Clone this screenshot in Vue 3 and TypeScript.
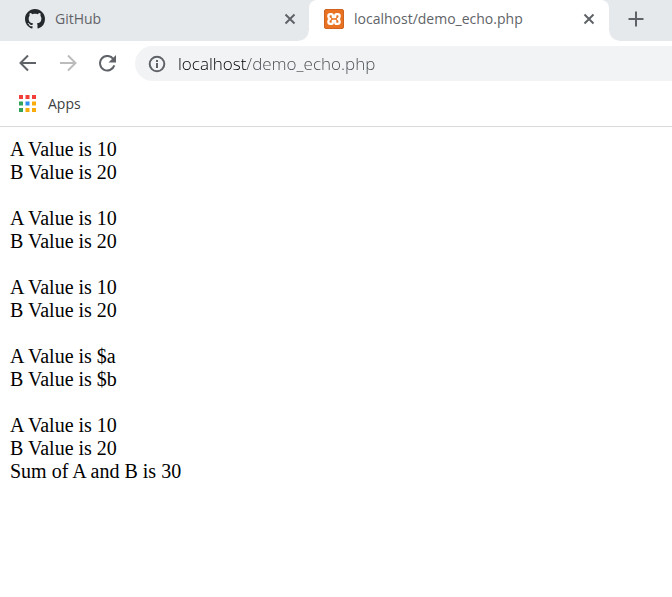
<script setup lang="ts">
import { ref } from 'vue'

const address = ref<string>('localhost/demo_echo.php')

const apps: string[] = [
  '#f33f3a', '#f33f3a', '#f33f3a',
  '#34a35a', '#2f8cf0', '#f9ab0c',
  '#34a35a', '#f9ab0c', '#f9ab0c',
]

const groups: string[][] = [
  ['A Value is 10', 'B Value is 20'],
  ['A Value is 10', 'B Value is 20'],
  ['A Value is 10', 'B Value is 20'],
  ['A Value is $a', 'B Value is $b'],
  ['A Value is 10', 'B Value is 20', 'Sum of A and B is 30'],
]
</script>

<template>
  <div class="browser">
    <header>
      <nav class="tabs" aria-label="Tabs">
        <div class="tab">
          <svg class="favicon" viewBox="0 0 16 16" aria-hidden="true">
            <path fill="#24292e" d="M8 0C3.58 0 0 3.58 0 8c0 3.54 2.29 6.53 5.47 7.59.4.07.55-.17.55-.38 0-.19-.01-.82-.01-1.49-2.01.37-2.53-.49-2.69-.94-.09-.23-.48-.94-.82-1.13-.28-.15-.68-.52-.01-.53.63-.01 1.08.58 1.23.82.72 1.21 1.87.87 2.33.66.07-.52.28-.87.51-1.07-1.78-.2-3.64-.89-3.64-3.95 0-.87.31-1.59.82-2.15-.08-.2-.36-1.02.08-2.12 0 0 .67-.21 2.2.82.64-.18 1.32-.27 2-.27s1.36.09 2 .27c1.53-1.04 2.2-.82 2.2-.82.44 1.1.16 1.92.08 2.12.51.56.82 1.27.82 2.15 0 3.07-1.87 3.75-3.65 3.95.29.25.54.73.54 1.48 0 1.07-.01 1.93-.01 2.2 0 .21.15.46.55.38A8.01 8.01 0 0 0 16 8c0-4.42-3.58-8-8-8z" />
          </svg>
          <a class="title" href="#github">GitHub</a>
          <button class="close" type="button" aria-label="Close GitHub">
            <svg viewBox="0 0 12 12"><path d="M1.5 1.5l9 9M10.5 1.5l-9 9" /></svg>
          </button>
        </div>
        <div class="tab active">
          <svg class="favicon" viewBox="0 0 20 20" aria-hidden="true">
            <rect x="0.5" y="0.5" width="19" height="19" rx="1.5" fill="#e97222" stroke="#ce641f" />
            <path d="M6.300 5.200h1c1 0 1.500.5 1.500 1.400v1.600h2.400V6.600c0-.9.500-1.400 1.500-1.400h1c1.200 0 1.900.7 1.900 1.700v.8c0 1.100-.6 1.700-1.700 2.300 1.100.6 1.700 1.200 1.700 2.300v.8c0 1-.7 1.700-1.900 1.700h-1c-1 0-1.500-.5-1.500-1.400v-1.600H8.800v1.600c0 .9-.5 1.400-1.500 1.400h-1c-1.200 0-1.900-.7-1.900-1.700v-.8c0-1.100.6-1.700 1.700-2.300-1.100-.6-1.700-1.200-1.700-2.300v-.8c0-1 .7-1.700 1.900-1.700z" fill="none" stroke="#fff" stroke-width="2.300" stroke-linejoin="round" />
          </svg>
          <a class="title" href="#demo" aria-current="page">localhost/demo_echo.php</a>
          <button class="close" type="button" aria-label="Close localhost">
            <svg viewBox="0 0 12 12"><path d="M1.5 1.5l9 9M10.5 1.5l-9 9" /></svg>
          </button>
        </div>
        <button class="new" type="button" aria-label="New tab">
          <svg viewBox="0 0 16 16"><path d="M8 .5v15M.5 8h15" /></svg>
        </button>
      </nav>

      <div class="toolbar">
        <button class="tool" type="button" aria-label="Back">
          <svg viewBox="0 0 18 18"><path d="M17 8H2M9 .5L1.500 8 9 15.500" /></svg>
        </button>
        <button class="tool" type="button" aria-label="Forward" disabled>
          <svg viewBox="0 0 18 18"><path d="M1 8h15M9 .5L16.500 8 9 15.500" /></svg>
        </button>
        <button class="tool" type="button" aria-label="Reload">
          <svg viewBox="0 0 18 18">
            <path d="M14.300 4A7.300 7.300 0 1 0 15.300 10.400" />
            <path class="solid" d="M17 0v7.500h-7.500z" />
          </svg>
        </button>
        <div class="omnibox">
          <button class="info" type="button" aria-label="Site information">
            <svg viewBox="0 0 18 18">
              <circle cx="9" cy="9" r="7.300" />
              <path d="M9 8v5M9 5v2" />
            </svg>
          </button>
          <input v-model="address" type="text" aria-label="Address" spellcheck="false" />
        </div>
      </div>

      <div class="bookmarks">
        <a class="apps" href="#apps">
          <svg viewBox="0 0 17 17" aria-hidden="true">
            <rect v-for="(color, i) in apps" :key="i" :x="(i % 3) * 6.500" :y="Math.floor(i / 3) * 6.500" width="4" height="4" :fill="color" />
          </svg>
          <span>Apps</span>
        </a>
      </div>
    </header>

    <main>
      <p v-for="(lines, g) in groups" :key="g">
        <span v-for="line in lines" :key="line">{{ line }}</span>
      </p>
    </main>
  </div>
</template>

<style>
body {
  background: #fff;
}
</style>

<style scoped>
.browser {
  color: #000;
}

header {
  border-bottom: 1px solid #d9dadc;
  font-family: "Open Sans", "Noto Sans", sans-serif;
}

button {
  display: flex;
  align-items: center;
  justify-content: center;
  padding: 0;
  border: 0;
  background: none;
  flex: none;
}

a {
  text-decoration: none;
}

svg {
  display: block;
  flex: none;
}

button svg {
  fill: none;
  stroke: #5f6368;
  stroke-width: 2;
}

.tabs {
  display: flex;
  height: 41px;
  background: #e6e9ec;
}

.tab {
  display: flex;
  align-items: center;
  box-sizing: border-box;
  flex: 0 1 300px;
  min-width: 0;
  height: 41px;
  padding: 0 14px 3px 15px;
}

.tab:first-child {
  flex-basis: 309px;
  padding-right: 13px;
  padding-left: 25px;
}

.active {
  position: relative;
  background: #fff;
  border-radius: 8px 8px 0 0;
}

.active::before,
.active::after {
  content: "";
  position: absolute;
  bottom: 0;
  width: 10px;
  height: 10px;
}

.active::before {
  right: 100%;
  background: radial-gradient(circle at 0 0, transparent 9px, #fff 10px);
}

.active::after {
  left: 100%;
  background: radial-gradient(circle at 100% 0, transparent 9px, #fff 10px);
}

.favicon {
  width: 20px;
  height: 20px;
}

.title {
  flex: 1;
  min-width: 0;
  overflow: hidden;
  margin-left: 10px;
  color: #5f6368;
  font-size: 14px;
  line-height: 20px;
  white-space: nowrap;
}

.close svg {
  width: 12px;
  height: 12px;
}

.new {
  width: 54px;
  padding-bottom: 3px;
}

.new svg {
  width: 16px;
  height: 16px;
}

.toolbar {
  display: flex;
  align-items: center;
  padding: 5px 0 0 8px;
}

.tool {
  width: 40px;
  height: 35px;
}

.tool svg {
  width: 18px;
  height: 18px;
}

.tool:disabled svg {
  stroke: #babcbe;
}

.tool .solid {
  fill: #5f6368;
  stroke: none;
}

.omnibox {
  display: flex;
  align-items: center;
  flex: 1;
  min-width: 0;
  height: 35px;
  margin-left: 7px;
  padding-left: 13px;
  border-radius: 18px 0 0 18px;
  background: #f1f3f4;
}

.info svg {
  width: 18px;
  height: 18px;
}

.omnibox input {
  flex: 1;
  min-width: 0;
  margin-left: 12px;
  padding: 0;
  border: 0;
  outline: 0;
  background: linear-gradient(90deg, #000 69px, #45494d 69px) text;
  color: transparent;
  font-family: inherit;
  font-size: 17px;
  font-weight: 300;
  line-height: 24px;
}

.bookmarks {
  display: flex;
  padding: 11px 19px;
}

.apps {
  display: flex;
  align-items: center;
  gap: 12px;
  color: #3c4043;
  font-size: 14px;
  line-height: 23px;
}

.apps svg {
  width: 17px;
  height: 17px;
}

main {
  padding: 11px 10px;
  font-family: "Liberation Serif", serif;
  font-size: 20px;
  line-height: 23px;
}

p {
  margin: 0 0 23px;
}

p span {
  display: block;
}
</style>
